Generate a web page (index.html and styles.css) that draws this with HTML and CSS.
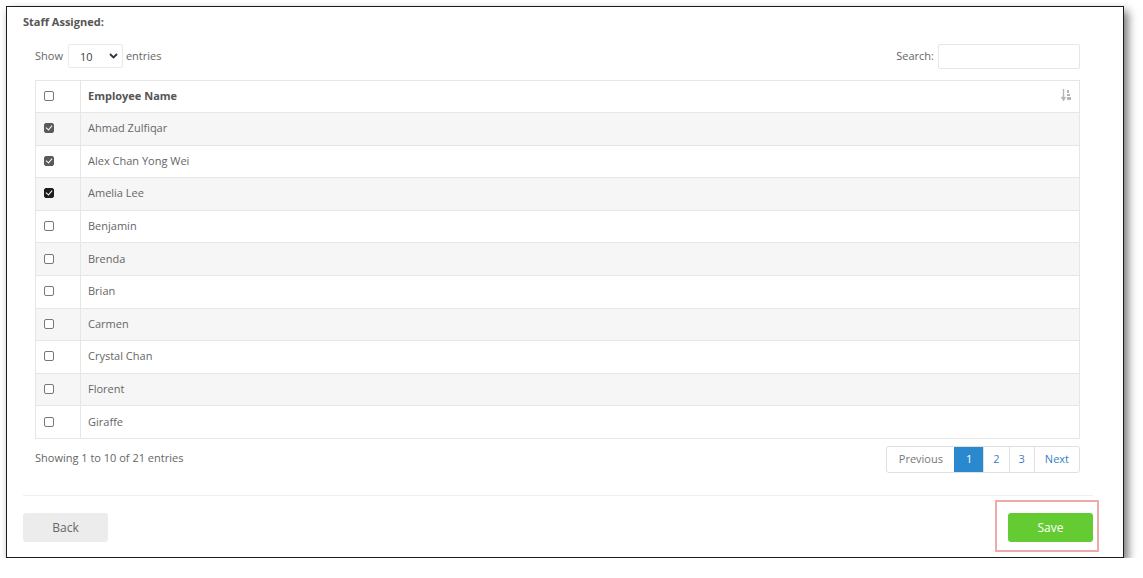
FILE: index.html
```html
<!DOCTYPE html>
<html>
    <head>
        <meta charset="UTF-8">
        <title>Staff Assigned</title>
        <link rel="stylesheet" href="styles.css">
    </head>
    <body>
        <div class="frame">
            <div class="title">Staff Assigned:</div>
            <div class="toolbar">
                <div class="length">
                    Show
                    <span class="select">10
                        <svg class="chev" width="9" height="6" viewBox="0 0 9 6"><path d="M1 1l3.5 3.5L8 1" fill="none" stroke="#333" stroke-width="1.8"/></svg>
                    </span>
                    entries
                </div>
                <div class="search">
                    Search:
                    <span class="input"></span>
                </div>
            </div>
            <table class="grid">
                <thead>
                    <tr>
                        <th class="chk"><span class="box"></span></th>
                        <th class="name">Employee Name
                            <svg class="sort" width="11" height="12" viewBox="0 0 11 12">
                                <path d="M2.5 0v10M0.5 8l2 3 2-3" fill="none" stroke="#b5b5b5" stroke-width="1.4"/>
                                <rect x="6" y="1" width="2" height="3" fill="#b5b5b5"/>
                                <rect x="6" y="5" width="3" height="2" fill="#b5b5b5"/>
                                <rect x="6" y="8" width="4" height="3" fill="#b5b5b5"/>
                            </svg>
                        </th>
                    </tr>
                </thead>
                <tbody>
                    <tr><td class="chk"><span class="box on"></span></td><td>Ahmad Zulfiqar</td></tr>
                    <tr><td class="chk"><span class="box on"></span></td><td>Alex Chan Yong Wei</td></tr>
                    <tr><td class="chk"><span class="box on dark"></span></td><td>Amelia Lee</td></tr>
                    <tr><td class="chk"><span class="box"></span></td><td>Benjamin</td></tr>
                    <tr><td class="chk"><span class="box"></span></td><td>Brenda</td></tr>
                    <tr><td class="chk"><span class="box"></span></td><td>Brian</td></tr>
                    <tr><td class="chk"><span class="box"></span></td><td>Carmen</td></tr>
                    <tr><td class="chk"><span class="box"></span></td><td>Crystal Chan</td></tr>
                    <tr><td class="chk"><span class="box"></span></td><td>Florent</td></tr>
                    <tr><td class="chk"><span class="box"></span></td><td>Giraffe</td></tr>
                </tbody>
            </table>
            <div class="footer">
                <div class="info">Showing 1 to 10 of 21 entries</div>
                <ul class="pager">
                    <li class="prev">Previous</li>
                    <li class="active">1</li>
                    <li>2</li>
                    <li>3</li>
                    <li class="next">Next</li>
                </ul>
            </div>
            <div class="actions">
                <button class="btn back">Back</button>
                <button class="btn save">Save</button>
            </div>
        </div>
    </body>
</html>
```

FILE: styles.css
```css
*{
    margin: 0;
    padding: 0;
    box-sizing: border-box;
}
html,body{
    width: 100%;
    background: #fff;
}
body{
    font-family: "Open Sans", "Liberation Sans", sans-serif;
    font-size: 11px;
    color: #666;
}
.frame{
    margin: 6px 0 0 6px;
    width: 1118px;
    height: 552px;
    border: 1px solid #1c1c1c;
    box-shadow: 4px 5px 9px rgba(0,0,0,.55);
    padding: 7px 30px 0 16px;
    background: #fff;
}
.title{
    line-height: 16px;
    font-weight: bold;
    color: #555;
}
.toolbar{
    margin: 14px 13px 0 12px;
    height: 25px;
    display: flex;
    justify-content: space-between;
    align-items: flex-start;
}
.length,.search{
    display: flex;
    align-items: center;
    height: 24px;
    padding-bottom: 2px;
    color: #666;
}
.select{
    margin: 2px 3px 0 5px;
    width: 55px;
    height: 24px;
    border: 1px solid #eaeaea;
    border-radius: 2px;
    padding-left: 11px;
    display: flex;
    align-items: center;
    font-size: 11px;
    color: #444;
}
.chev{
    margin-left: auto;
    margin-right: 4px;
}
.input{
    margin: 2px 0 0 4px;
    width: 142px;
    height: 25px;
    border: 1px solid #e6e6e6;
    border-radius: 2px;
}
.grid{
    margin: 11px 13px 0 12px;
    width: 1045px;
    border-collapse: collapse;
    border: 1px solid #e6e6e6;
}
.grid th,.grid td{
    border: 1px solid #e6e6e6;
    text-align: left;
    padding: 0 0 2px 7px;
}
.grid th{
    height: 32px;
    font-weight: bold;
    color: #555;
}
.grid td{
    height: 32.6px;
    color: #666;
}
.grid tbody tr:nth-child(odd){
    background: #f6f6f6;
}
.grid .chk{
    width: 45px;
    padding: 0 0 1px 8px;
}
.grid .name{
    position: relative;
}
.sort{
    position: absolute;
    right: 7px;
    top: 8px;
}
.box{
    display: block;
    width: 10px;
    height: 10px;
    border: 1px solid #777;
    border-radius: 2px;
    background: #fff;
    position: relative;
}
.box.on{
    background: #5a5a5a;
    border-color: #5a5a5a;
}
.box.dark{
    background: #1e1e1e;
    border-color: #1e1e1e;
}
.box.on::after{
    content: "";
    position: absolute;
    left: 2px;
    top: 0px;
    width: 3px;
    height: 5px;
    border: solid #fff;
    border-width: 0 1.5px 1.5px 0;
    transform: rotate(40deg);
}
.footer{
    margin: 7px 13px 0 12px;
    height: 27px;
    display: flex;
    justify-content: space-between;
    align-items: center;
}
.info{
    padding-bottom: 4px;
}
.pager{
    list-style: none;
    display: flex;
    height: 27px;
    border: 1px solid #e0e0e0;
    border-radius: 3px;
}
.pager li{
    height: 25px;
    line-height: 24px;
    padding: 0 9px;
    color: #3a7fc0;
    border-left: 1px solid #e0e0e0;
}
.pager li:first-child{
    border-left: 0;
}
.pager .prev{
    color: #777;
    padding: 0 11px 0 12px;
}
.pager .next{
    padding: 0 10px;
}
.pager .active{
    background: #2a88cf;
    color: #fff;
    padding: 0 11px;
    border-left-color: #2a88cf;
}
.actions{
    margin-top: 22px;
    border-top: 1px solid #efefef;
    padding-top: 17px;
    display: flex;
    justify-content: space-between;
}
.btn{
    width: 85px;
    height: 29px;
    border: 0;
    border-radius: 3px;
    font-family: "Open Sans", "Liberation Sans", sans-serif;
    font-size: 12px;
}
.back{
    background: #ececec;
    color: #666;
}
.save{
    background: #64cb32;
    color: #fff;
    position: relative;
}
.save::after{
    content: "";
    position: absolute;
    left: -13px;
    right: -6px;
    top: -13px;
    bottom: -10px;
    border: 2px solid #f0a9a9;
}
```
